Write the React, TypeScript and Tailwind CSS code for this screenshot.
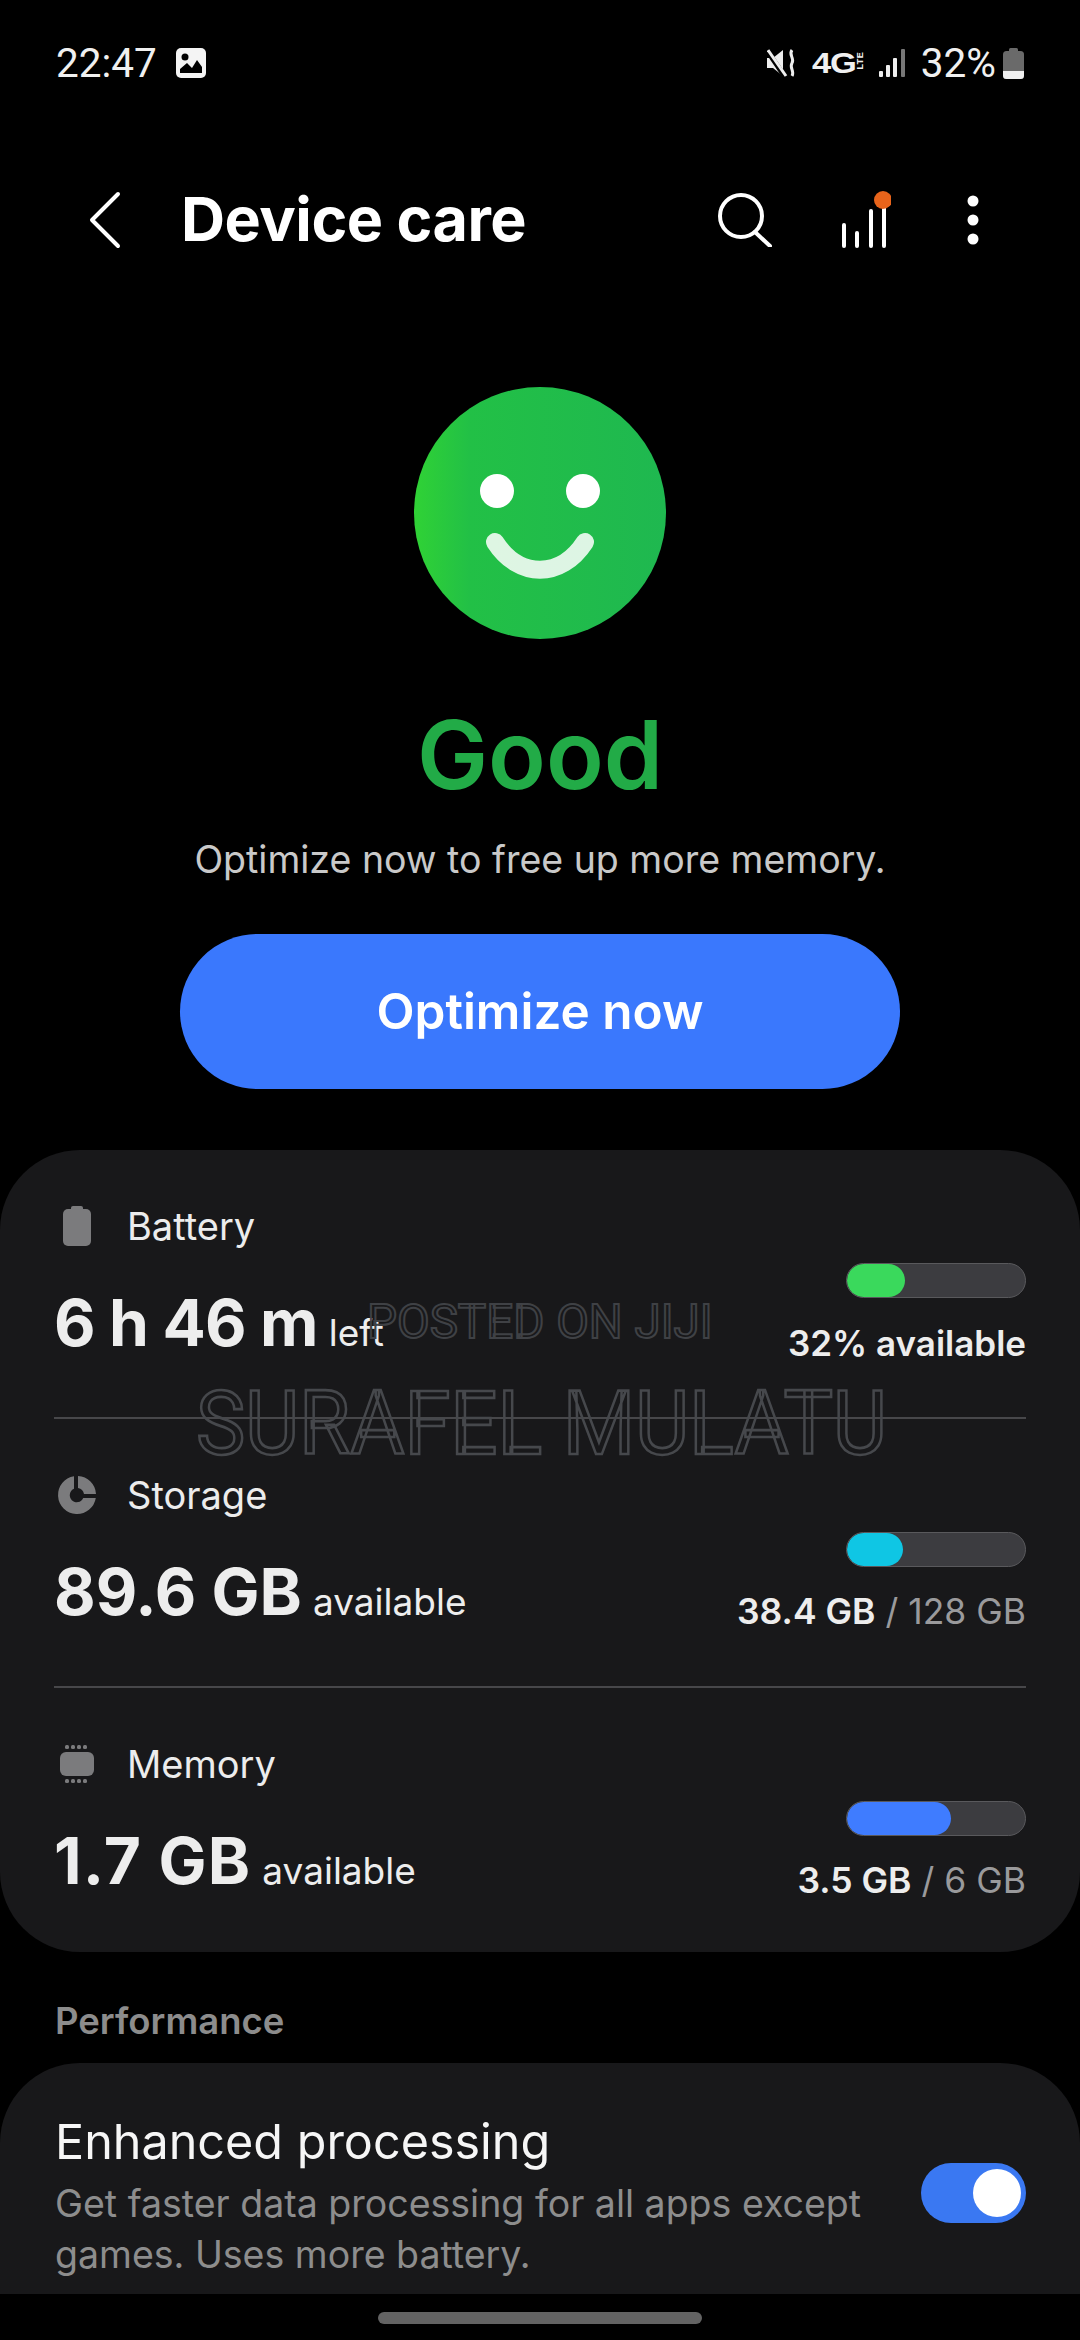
const BatteryIcon = () => (
  <svg width="28" height="40" viewBox="0 0 28 40" fill="#7b7b7d">
    <rect x="8" y="0" width="12" height="6" rx="2" />
    <rect x="0" y="3" width="28" height="37" rx="5" />
  </svg>
)

const StorageIcon = () => (
  <svg width="40" height="40" viewBox="0 0 40 40" fill="#7b7b7d">
    <path d="M17 1.2A19 19 0 1 0 38.8 23H26.2A7 7 0 1 1 17 13.8Z" />
    <path d="M21 1A19 19 0 0 1 39 19H27A7.5 7.5 0 0 0 21 13Z" />
  </svg>
)

const MemoryIcon = () => (
  <svg width="34" height="38" viewBox="0 0 34 38" fill="#7b7b7d">
    <rect x="0" y="7" width="34" height="24" rx="6" />
    {[5, 11, 17, 23].map((x) => (
      <g key={x}>
        <rect x={x} y="0" width="4" height="4" rx="1.5" />
        <rect x={x} y="34" width="4" height="4" rx="1.5" />
      </g>
    ))}
  </svg>
)

function StatusBar() {
  return (
    <div className="mt-[38px] flex h-[50px] items-center justify-between pl-[56px] pr-[56px] font-['Roboto',sans-serif] text-[40.5px] text-[#f0f0f0]">
      <div className="flex items-center gap-[19px]">
        <span>22:47</span>
        <svg width="30" height="30" viewBox="0 0 30 30">
          <rect width="30" height="30" rx="5" fill="#f4f4f4" />
          <circle cx="9" cy="9" r="3.5" fill="#000" />
          <path d="M4 25V21L11 15L16 20L21 12L26 19V25Z" fill="#000" />
        </svg>
      </div>
      <div className="flex items-center">
        <svg width="29" height="28" viewBox="0 0 29 28">
          <path d="M0 9H6L16 1V27L6 19H0Z" fill="#eee" />
          <path d="M-1 0L18 28" stroke="#000" strokeWidth="5" />
          <path d="M1 1L19 27" stroke="#eee" strokeWidth="3" />
          <path d="M25 1C21 6 28 9 25 14C22 19 28 22 25 27" fill="none" stroke="#eee" strokeWidth="3" />
        </svg>
        <div className="ml-[16px] flex w-[54px] items-center font-['Liberation_Sans',sans-serif] font-bold leading-none">
          <span className="w-[42px] origin-left scale-x-[1.15] text-[30px] tracking-[-1px]">4G</span>
          <span className="w-[12px] origin-center -rotate-90 text-[9px] tracking-[0.5px]">LTE</span>
        </div>
        <svg className="ml-[13px]" width="26" height="28" viewBox="0 0 26 28">
          <rect x="0" y="22" width="4" height="6" rx="1" fill="#eee" />
          <rect x="7" y="16" width="4" height="12" rx="1" fill="#eee" />
          <rect x="14" y="9" width="4" height="19" rx="1" fill="#eee" />
          <rect x="22" y="0" width="4" height="28" rx="1" fill="#777" />
        </svg>
        <span className="ml-[16px]">32%</span>
        <svg className="ml-[7px]" width="21" height="31" viewBox="0 0 21 31">
          <rect x="6" y="0" width="9" height="5" rx="1.5" fill="#6a6a6a" />
          <rect x="0" y="3" width="21" height="28" rx="3.5" fill="#6a6a6a" />
          <path d="M0 23H21V27.5A3.5 3.5 0 0 1 17.5 31H3.5A3.5 3.5 0 0 1 0 27.5Z" fill="#efefef" />
        </svg>
      </div>
    </div>
  )
}

function Header() {
  return (
    <div className="mt-[82px] flex h-[100px] items-center text-white">
      <svg className="ml-[88px]" width="34" height="58" viewBox="0 0 34 58" fill="none" stroke="#fff" strokeWidth="4" strokeLinecap="round" strokeLinejoin="round">
        <path d="M30 3L4 29L30 55" />
      </svg>
      <h1 className="ml-[59px] text-[61px] font-bold tracking-[-0.5px]">Device care</h1>
      <svg className="ml-auto" width="54" height="54" viewBox="0 0 54 54" fill="none" stroke="#fff" strokeWidth="4" strokeLinecap="round">
        <circle cx="23" cy="23" r="21" />
        <path d="M37 39L52 53" />
      </svg>
      <svg className="ml-[69px]" width="50" height="58" viewBox="0 0 50 58">
        <g stroke="#fff" strokeWidth="4" strokeLinecap="round">
          <path d="M3 55V34" />
          <path d="M16 55V42" />
          <path d="M30 55V20" />
          <path d="M43 55V16" />
        </g>
        <circle cx="42" cy="9" r="9" fill="#e8641b" />
      </svg>
      <svg className="ml-[76px] mr-[101px]" width="12" height="50" viewBox="0 0 12 50" fill="#fff">
        <circle cx="6" cy="6" r="5.5" />
        <circle cx="6" cy="25" r="5.5" />
        <circle cx="6" cy="44" r="5.5" />
      </svg>
    </div>
  )
}

function Face() {
  return (
    <div className="mx-auto mt-[117px] size-[252px] shrink-0 rounded-full bg-[linear-gradient(90deg,#30d235_0%,#22c046_22%,#1fb850_100%)]">
      <svg width="252" height="252" viewBox="0 0 252 252">
        <circle cx="83" cy="104" r="17" fill="#fff" />
        <circle cx="169" cy="104" r="17" fill="#fff" />
        <path d="M81 155C105 192 147 192 171 155" fill="none" stroke="#fff" strokeOpacity="0.85" strokeWidth="18" strokeLinecap="round" />
      </svg>
    </div>
  )
}

type RowProps = {
  icon: React.ReactNode
  label: string
  value: string
  valueTracking: string
  unit: string
  barColor: string
  barWidth: string
  right: React.ReactNode
  last?: boolean
}

function Row({ icon, label, value, valueTracking, unit, barColor, barWidth, right, last }: RowProps) {
  return (
    <div className={last ? "mx-[54px] flex justify-between pb-[46px]" : "mx-[54px] flex justify-between border-b-2 border-[#47474a] pb-[49px]"}>
      <div className="pt-[51px]">
        <div className="flex h-[50px] items-center text-[38px] text-[#ececec]">
          <span className="flex w-[73px] justify-center pr-[27px]">{icon}</span>
          {label}
        </div>
        <div className="mt-[37px] flex h-[70px] items-baseline text-[#ededed]">
          <span className={`text-[64px] font-bold leading-[70px] ${valueTracking}`}>{value}</span>
          <span className="ml-[11px] text-[37px]">{unit}</span>
        </div>
      </div>
      <div className="flex flex-col items-end pt-[113px]">
        <div className="h-[35px] w-[180px] overflow-hidden rounded-full border border-[#59595c] bg-[#3c3c40]">
          <div className={`h-full rounded-full ${barColor} ${barWidth}`} />
        </div>
        <div className="mt-[20px] h-[50px] text-[35.5px] leading-[50px]">{right}</div>
      </div>
    </div>
  )
}

export default function App() {
  return (
    <div className="relative flex h-[2340px] w-[1080px] flex-col overflow-hidden bg-black font-['Inter',sans-serif]">
      <StatusBar />
      <Header />
      <Face />
      <div className="mt-[61px] h-[110px] text-center text-[95px] font-semibold leading-[110px] text-[#22ab47]">Good</div>
      <div className="mt-[25px] h-[50px] text-center text-[37.5px] leading-[50px] text-[#c9c9c9]">Optimize now to free up more memory.</div>
      <div className="mx-auto mt-[49px] flex h-[155px] w-[720px] shrink-0 items-center justify-center rounded-full bg-[#3a78fd] text-[49.5px] font-semibold text-white">
        Optimize now
      </div>

      <div className="relative mt-[61px] rounded-[80px] bg-[#18181a]">
        <Row
          icon={<BatteryIcon />}
          label="Battery"
          value="6 h 46 m"
          valueTracking="tracking-[-0.8px]"
          unit="left"
          barColor="bg-[#3ad95c]"
          barWidth="w-[58px]"
          right={<span className="text-[35px] font-semibold text-[#ededed]">32% available</span>}
        />
        <Row
          icon={<StorageIcon />}
          label="Storage"
          value="89.6 GB"
          valueTracking="tracking-[0px]"
          unit="available"
          barColor="bg-[#0fc6e4]"
          barWidth="w-[56px]"
          right={
            <>
              <span className="font-semibold text-[#ededed]">38.4 GB</span>
              <span className="text-[#9a9a9c]"> / 128 GB</span>
            </>
          }
        />
        <Row
          last
          icon={<MemoryIcon />}
          label="Memory"
          value="1.7 GB"
          valueTracking="tracking-[1.2px]"
          unit="available"
          barColor="bg-[#3f7cff]"
          barWidth="w-[104px]"
          right={
            <>
              <span className="font-semibold text-[#ededed]">3.5 GB</span>
              <span className="text-[#9a9a9c]"> / 6 GB</span>
            </>
          }
        />
        {/* watermark */}
        <div className="pointer-events-none absolute left-[367px] top-[141px] font-['Roboto',sans-serif] text-[47.5px] leading-[62px] text-transparent [-webkit-text-stroke:2px_#3f4145]">
          POSTED ON JIJI
        </div>
        <div className="pointer-events-none absolute left-[196px] top-[220px] origin-top scale-y-[1.08] font-['Roboto',sans-serif] text-[83px] leading-[100px] text-transparent [-webkit-text-stroke:2.5px_#46484c]">
          SURAFEL MULATU
        </div>
      </div>

      <div className="ml-[55px] mt-[44px] h-[50px] text-[36.5px] font-semibold leading-[50px] text-[#8c8c8c]">Performance</div>

      <div className="mt-[17px] flex h-[231px] shrink-0 items-start justify-between overflow-hidden rounded-t-[80px] bg-[#18181a] pl-[55px] pr-[54px]">
        <div className="pt-[49px]">
          <div className="text-[48.5px] leading-[60px] text-[#f6f6f6]">Enhanced processing</div>
          <div className="mt-[6px] w-[830px] text-[37.5px] leading-[51px] text-[#8d8d8d]">
            Get faster data processing for all apps except games. Uses more battery.
          </div>
        </div>
        <div className="mt-[100px] flex h-[60px] w-[105px] shrink-0 items-center justify-end rounded-full bg-[#3a78f2] pr-[5px]">
          <div className="size-[48px] rounded-full bg-white" />
        </div>
      </div>

      <div className="mx-auto mt-[18px] h-[12px] w-[324px] shrink-0 rounded-full bg-[#636363]" />
    </div>
  )
}
